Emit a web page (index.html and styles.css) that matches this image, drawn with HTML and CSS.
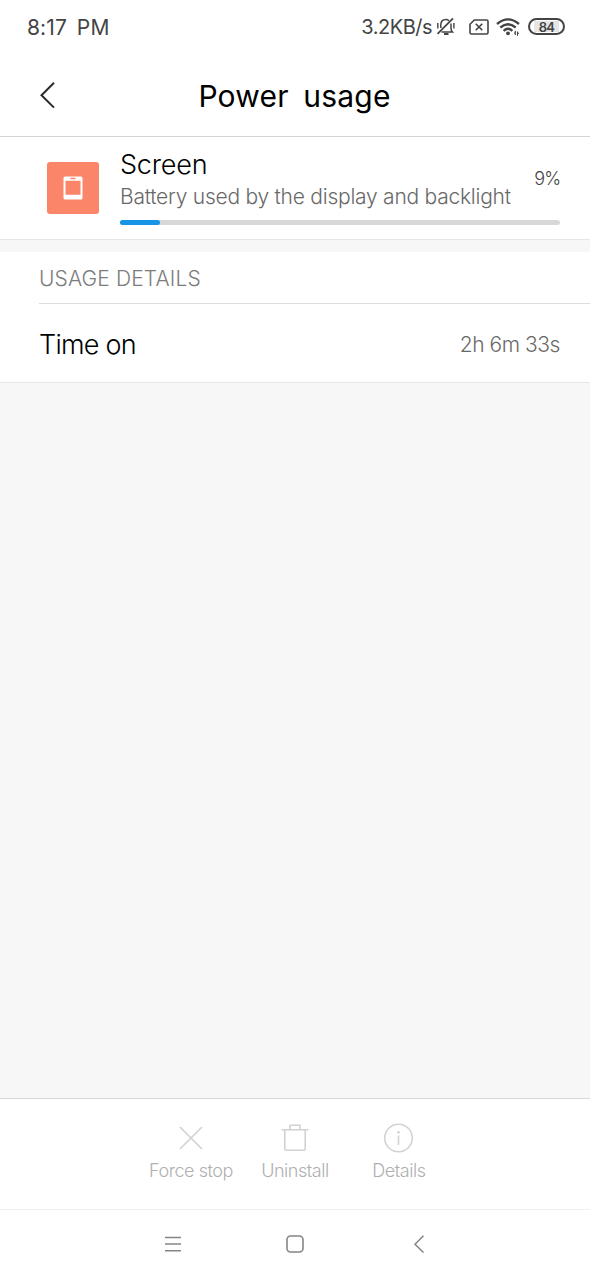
FILE: index.html
```html
<!DOCTYPE html>
<html lang="en">

<head>
    <meta charset="UTF-8">
    <meta name="viewport" content="width=device-width, initial-scale=1.0">
    <title>Power usage</title>
    <link rel="stylesheet" href="styles.css">
</head>

<body>

    <div class="screen">
        <!-- Status bar -->
        <div class="status-bar">
            <span class="clock">8:17 PM</span>
            <div class="status-right">
                <span class="speed">3.2KB/s</span>
                <svg class="icon-mute" width="20" height="20" viewBox="0 0 20 20" fill="none" stroke="#444" stroke-width="1.500">
                    <path d="M4.800 11V8C4.800 4.500 6.800 2.500 9.800 2.500c1.300 0 2.300.4 3.200 1.200M15 6.500v5c0 1.700.5 2.500 1.500 3.500H5.500"/>
                    <path d="M1.500 16.800L17 1.300" stroke-width="1.700"/>
                    <path d="M8 17h4.500" stroke-width="2"/>
                    <path d="M1.800 6v5.500M17.900 6v5.500" stroke-width="1.400"/>
                </svg>
                <svg class="icon-sim" width="20" height="16" viewBox="0 0 20 16" fill="none" stroke="#444" stroke-width="1.600">
                    <path d="M5.300 1H17.500q1.500 0 1.500 1.500v11q0 1.500-1.500 1.500h-15Q1 15 1 13.500V5.300z"/>
                    <path d="M6.700 4.700l6.600 6.600M13.300 4.700l-6.600 6.600"/>
                </svg>
                <svg class="icon-wifi" width="24" height="18" viewBox="0 0 24 18" fill="none" stroke="#444" stroke-width="2.300">
                    <path d="M1 6Q12-3.200 23 6M4.300 9.500Q12 3 19.700 9.500M7.600 12.800Q12 8.800 16.400 12.800"/>
                    <circle cx="12" cy="15.300" r="1.900" fill="#444" stroke="none"/>
                    <path d="M19.300 12.800v4.200M21.500 13.500v4.200M18 15h1M21.800 15.300h1.300" stroke-width="1.100"/>
                </svg>
                <span class="battery"><span class="battery-level">84</span></span>
            </div>
        </div>

        <!-- Title bar -->
        <header class="title-bar">
            <svg class="back" width="18" height="28" viewBox="0 0 18 28" fill="none" stroke="#2b2b2b" stroke-width="2">
                <path d="M16 .8L3.500 13.200 16 25.600"/>
            </svg>
            <h1>Power usage</h1>
        </header>

        <!-- Battery consumer -->
        <section class="usage">
            <div class="usage-icon">
                <svg width="20" height="24" viewBox="0 0 20 24">
                    <path fill="#fff" fill-rule="evenodd" d="M2 .5h16q1.500 0 1.500 1.500v20q0 1.500-1.500 1.500H2Q.5 23.500.5 22V2Q.5.500 2 .5zM2.500 4.800v14h15v-14zM7.500 1.800v1.500h5V1.800z"/>
                </svg>
            </div>
            <div class="usage-body">
                <div class="usage-head">
                    <div>
                        <h2>Screen</h2>
                        <p class="summary">Battery used by the display and backlight</p>
                    </div>
                    <span class="percent">9%</span>
                </div>
                <div class="progress"><div class="progress-fill" style="width: 9%"></div></div>
            </div>
        </section>

        <!-- Usage details -->
        <section class="details">
            <h3>USAGE DETAILS</h3>
            <div class="detail-row">
                <span class="label">Time on</span>
                <span class="value">2h 6m 33s</span>
            </div>
        </section>

        <div class="filler"></div>

        <!-- Actions -->
        <div class="actions">
            <div class="action">
                <svg width="32" height="32" viewBox="0 0 32 32" fill="none" stroke="#d2d2d2" stroke-width="1.600">
                    <path d="M5 5l22 22M27 5L5 27"/>
                </svg>
                <span>Force stop</span>
            </div>
            <div class="action">
                <svg width="32" height="32" viewBox="0 0 32 32" fill="none" stroke="#d2d2d2" stroke-width="1.600">
                    <path d="M2.500 7.800h27M11 7.500V3.300h10v4.200M5.800 8v19q0 1.300 1.300 1.300h17.800q1.300 0 1.300-1.300V8"/>
                </svg>
                <span>Uninstall</span>
            </div>
            <div class="action">
                <svg width="32" height="32" viewBox="0 0 32 32" fill="none" stroke="#d2d2d2" stroke-width="1.600">
                    <circle cx="15.500" cy="16" r="13.800"/>
                    <path d="M15.500 13.500v9.500"/>
                    <circle cx="15.500" cy="10.200" r="1.300" fill="#d2d2d2" stroke="none"/>
                </svg>
                <span>Details</span>
            </div>
        </div>

        <!-- Navigation bar -->
        <nav class="nav-bar">
            <svg width="20" height="20" viewBox="0 0 20 20" fill="none" stroke="#858585" stroke-width="1.500">
                <path d="M2 3.500h16M2 10h16M2 16.700h16"/>
            </svg>
            <svg width="20" height="20" viewBox="0 0 20 20" fill="none" stroke="#858585" stroke-width="1.600">
                <rect x="2" y="2" width="16" height="16" rx="3.500"/>
            </svg>
            <svg width="20" height="20" viewBox="0 0 20 20" fill="none" stroke="#858585" stroke-width="1.500">
                <path d="M16.500 1.800L8 10.200l8.500 8.300"/>
            </svg>
        </nav>
    </div>

</body>

</html>
```
FILE: styles.css
```css
* {
    margin: 0;
    padding: 0;
    box-sizing: border-box;
}

body {
    font-family: Inter, 'Liberation Sans', sans-serif;
    font-weight: 300;
    background-color: #f7f7f7;
    color: #000;
}

h1,
h2,
h3 {
    font-weight: 300;
}

svg {
    display: block;
    flex: none;
}

.screen {
    display: flex;
    flex-direction: column;
    width: 590px;
    height: 1280px;
}

/* Status bar */
.status-bar {
    display: flex;
    justify-content: space-between;
    height: 55px;
    padding: 0 25px 0 27px;
    background-color: #fff;
    color: #444;
    font-size: 21px;
    line-height: 55px;
    font-weight: 400;
}

.clock {
    letter-spacing: 0.1px;
    word-spacing: 4px;
}

.status-right {
    display: flex;
    align-items: center;
    height: 53px;
}

.speed {
    padding-top: 2px;
    font-size: 20px;
    letter-spacing: -0.5px;
}

.icon-mute {
    margin-left: 4px;
}

.icon-sim {
    margin-left: 13px;
}

.icon-wifi {
    margin-left: 7px;
}

.battery {
    width: 37px;
    height: 17px;
    margin-left: 8px;
    padding: 1px;
    border: 2px solid #444;
    border-radius: 9px;
}

.battery-level {
    display: block;
    width: 25px;
    height: 11px;
    margin-left: 3px;
    background-color: #e6e6e6;
    font-size: 13px;
    font-weight: 600;
    line-height: 12px;
    letter-spacing: -0.8px;
    text-align: center;
}

/* Title bar */
.title-bar {
    display: flex;
    align-items: center;
    height: 82px;
    padding: 0 57px 0 38px;
    background-color: #fff;
    border-bottom: 1px solid #d5d5d5;
}

.title-bar h1 {
    flex: 1;
    font-size: 30px;
    font-weight: 400;
    letter-spacing: 0.2px;
    text-align: center;
    word-spacing: 6px;
}

/* Battery consumer */
.usage {
    display: flex;
    height: 103px;
    padding: 0 30px 0 47px;
    background-color: #fff;
    border-bottom: 1px solid #e6e6e6;
}

.usage-icon {
    display: flex;
    align-items: center;
    justify-content: center;
    width: 52px;
    height: 52px;
    margin: 25px 21px 0 0;
    border-radius: 3px;
    background-color: #fa8569;
}

.usage-body {
    flex: 1;
}

.usage-head {
    display: flex;
    justify-content: space-between;
    height: 83px;
    padding-top: 10px;
    white-space: nowrap;
}

.usage h2 {
    font-size: 27px;
    line-height: 36px;
    letter-spacing: -0.2px;
}

.summary {
    color: #686868;
    font-size: 21px;
    line-height: 27px;
    letter-spacing: -0.24px;
}

.percent {
    margin-top: 20px;
    color: #444;
    font-size: 18px;
    line-height: 24px;
    letter-spacing: -1px;
}

.progress {
    height: 5px;
    border-radius: 3px;
    background-color: #d8d8d8;
}

.progress-fill {
    height: 5px;
    border-radius: 3px;
    background-color: #1594e8;
}

/* Usage details */
.details {
    height: 131px;
    margin-top: 12px;
    padding-left: 39px;
    background-color: #fff;
    border-bottom: 1px solid #e6e6e6;
}

.details h3 {
    height: 52px;
    border-bottom: 1px solid #dedede;
    color: #7c7c7c;
    font-size: 21px;
    line-height: 53px;
    letter-spacing: 0.12px;
}

.detail-row {
    display: flex;
    align-items: center;
    justify-content: space-between;
    height: 80px;
    padding-right: 30px;
}

.label {
    font-size: 27px;
    letter-spacing: -0.75px;
}

.value {
    color: #686868;
    font-size: 21px;
    letter-spacing: -0.45px;
}

.filler {
    flex: 1;
}

/* Bottom actions */
.actions {
    display: flex;
    justify-content: center;
    height: 111px;
    padding-top: 23px;
    background-color: #fff;
    border-top: 1px solid #d8d8d8;
}

.action {
    display: flex;
    flex-direction: column;
    align-items: center;
    width: 104px;
    color: #b0b0b0;
    font-size: 18px;
    line-height: 34px;
    letter-spacing: -0.45px;
    white-space: nowrap;
}

/* Navigation bar */
.nav-bar {
    display: flex;
    justify-content: center;
    gap: 102px;
    height: 71px;
    padding-top: 24px;
    background-color: #fff;
    border-top: 1px solid #f0f0f0;
}
```
